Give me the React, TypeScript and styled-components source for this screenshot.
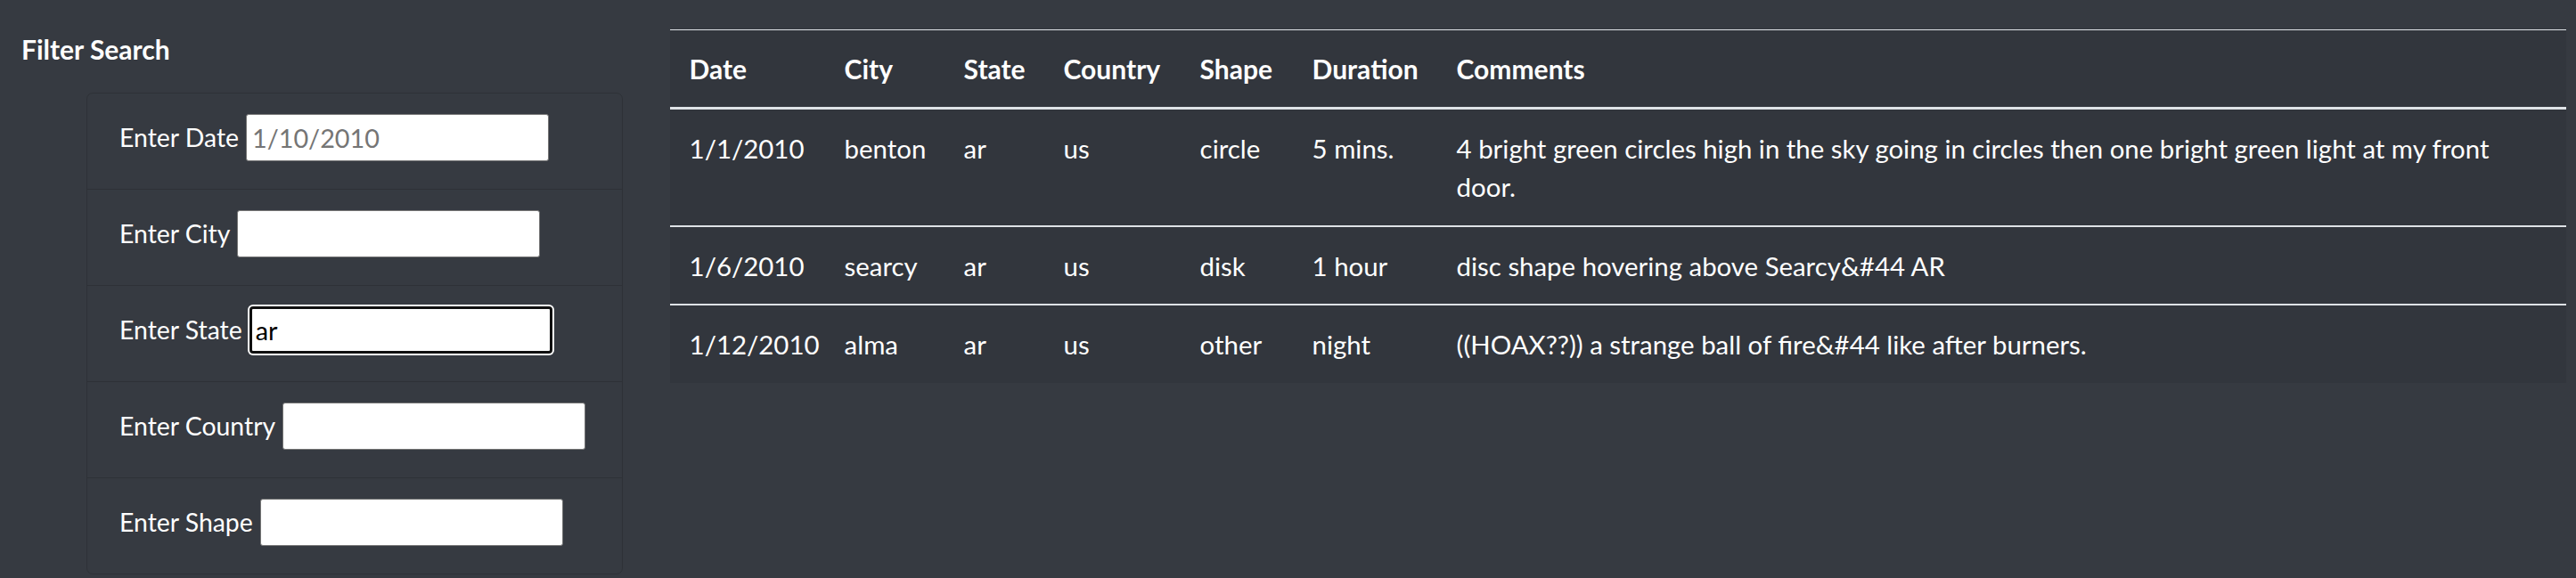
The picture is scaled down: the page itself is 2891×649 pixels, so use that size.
import React from "react";
import styled, { createGlobalStyle } from "styled-components";

const FONT = `Lato, "Noto Sans", sans-serif`;

const Global = createGlobalStyle`
  html, body { margin: 0; padding: 0; }
  body {
    background: #363a41;
    color: #fff;
    font-family: ${FONT};
    font-size: 29.4px;
    line-height: 43.2px;
  }
`;

const Page = styled.div`
  display: grid;
  grid-template-columns: 725px 1fr;
  width: 2891px;
  height: 649px;
  overflow: hidden;
`;

const Side = styled.aside`
  display: flex;
  flex-direction: column;
  padding: 37px 0 0 24px;
`;

const SideTitle = styled.h5`
  margin: 0 0 31px 0;
  font-size: 30px;
  font-weight: 700;
  line-height: 1.2;
`;

const Card = styled.ul`
  list-style: none;
  margin: 0 0 0 73px;
  padding: 0;
  width: 600px;
  border: 1px solid rgba(0, 0, 0, 0.14);
  border-radius: 7px;
`;

const FilterRow = styled.li`
  display: flex;
  align-items: center;
  gap: 8px;
  height: 53px;
  padding: 23px 36px 31px;
  & + & {
    border-top: 1px solid rgba(0, 0, 0, 0.14);
  }
`;

const FilterLabel = styled.label`
  white-space: nowrap;
  font-size: 28.4px;
`;

const FilterInput = styled.input<{ $focused?: boolean }>`
  box-sizing: border-box;
  width: 340px;
  height: 53px;
  padding: 0 6px;
  background: #fff;
  color: #000;
  font-family: ${FONT};
  font-size: 28.8px;
  border: 1px solid #767676;
  border-radius: 3px;
  outline: none;
  ${(p) =>
    p.$focused &&
    `
    border: 3px solid #101010;
    padding: 0 4px;
    border-radius: 4px;
    box-shadow: 0 0 0 2px #fff;
    text-decoration: underline wavy #e00;
    text-decoration-thickness: 1px;
    text-underline-offset: 6px;
  `}
  &::placeholder {
    color: #757575;
  }
`;

const Main = styled.main`
  padding: 33px 11px 0 27px;
`;

const Table = styled.table`
  width: 100%;
  table-layout: fixed;
  border-collapse: collapse;
  background: #32363d;
`;

const Th = styled.th`
  text-align: left;
  font-weight: 700;
  font-size: 30px;
  padding: 21.6px;
  border-top: 1px solid #dee2e6;
  border-bottom: 3px solid #dee2e6;
  vertical-align: bottom;
`;

const Td = styled.td`
  padding: 21.6px;
  vertical-align: top;
  border-top: 2px solid #dee2e6;
`;

const cols = [174, 134, 112, 153, 126, 162];

const headers = ["Date", "City", "State", "Country", "Shape", "Duration", "Comments"];

const rows = [
  ["1/1/2010", "benton", "ar", "us", "circle", "5 mins.", "4 bright green circles high in the sky going in circles then one bright green light at my front door."],
  ["1/6/2010", "searcy", "ar", "us", "disk", "1 hour", "disc shape hovering above Searcy&#44 AR"],
  ["1/12/2010", "alma", "ar", "us", "other", "night", "((HOAX??)) a strange ball of fire&#44 like after burners."],
];

const fields = [
  { label: "Enter Date", placeholder: "1/10/2010" },
  { label: "Enter City" },
  { label: "Enter State", value: "ar", focused: true },
  { label: "Enter Country" },
  { label: "Enter Shape" },
];

export default function App() {
  return (
    <>
      <Global />
      <Page>
        <Side>
          <SideTitle>Filter Search</SideTitle>
          <Card>
            {fields.map((f) => (
              <FilterRow key={f.label}>
                <FilterLabel>{f.label}</FilterLabel>
                <FilterInput
                  type="text"
                  placeholder={f.placeholder}
                  defaultValue={f.value}
                  $focused={f.focused}
                />
              </FilterRow>
            ))}
          </Card>
        </Side>
        <Main>
          <Table>
            <colgroup>
              {cols.map((w, i) => (
                <col key={i} style={{ width: w }} />
              ))}
              <col />
            </colgroup>
            <thead>
              <tr>
                {headers.map((h) => (
                  <Th key={h}>{h}</Th>
                ))}
              </tr>
            </thead>
            <tbody>
              {rows.map((r, i) => (
                <tr key={i}>
                  {r.map((c, j) => (
                    <Td key={j}>{c}</Td>
                  ))}
                </tr>
              ))}
            </tbody>
          </Table>
        </Main>
      </Page>
    </>
  );
}
